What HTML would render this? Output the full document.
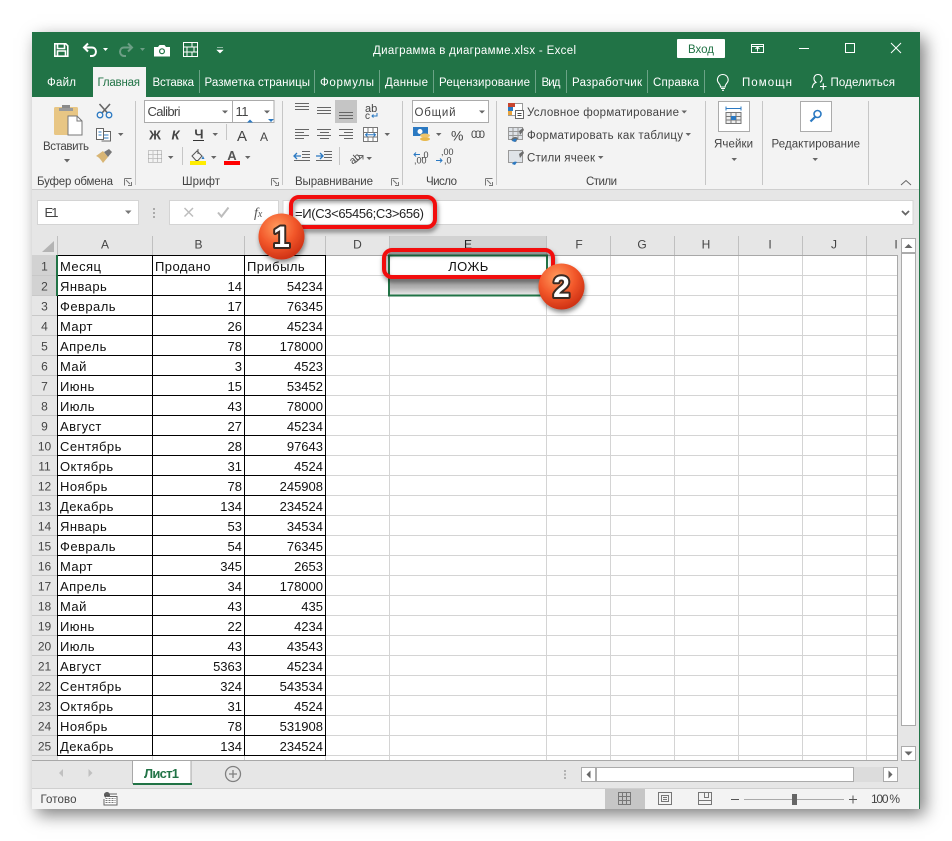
<!DOCTYPE html>
<html><head><meta charset="utf-8"><style>
html,body{margin:0;padding:0;background:#fff;width:952px;height:841px;overflow:hidden}
#w{position:absolute;left:32px;top:32px;width:888px;height:777px;box-shadow:5px 6px 16px rgba(0,0,0,.5)}
svg{position:absolute;left:0;top:0}
text{font-family:"Liberation Sans",sans-serif;font-size:11.5px;fill:#444}
.t text{fill:#fff}
.c text{font-size:13px;fill:#111;letter-spacing:.45px}
.n text{font-size:13px;fill:#111;text-anchor:end}
.h text{font-size:12px;fill:#444;text-anchor:middle}
.i{fill:none;stroke:#666;stroke-width:1}
.a{fill:#666}
</style></head><body><div id="w"></div>
<svg width="952" height="841" viewBox="0 0 952 841" xmlns="http://www.w3.org/2000/svg">
<defs>
<radialGradient id="b" cx=".4" cy=".3" r=".8"><stop offset="0" stop-color="#ff9a5c"/><stop offset=".5" stop-color="#f2572a"/><stop offset="1" stop-color="#c4260e"/></radialGradient>
<linearGradient id="s" x1="0" x2="0" y1="0" y2="1"><stop offset="0" stop-color="#9c9c9c"/><stop offset=".6" stop-color="#b2b2b2"/><stop offset="1" stop-color="#ececec"/></linearGradient>
<filter id="ds" x="-20%" y="-30%" width="140%" height="170%"><feDropShadow dx="1" dy="3" stdDeviation="2.5" flood-color="#000" flood-opacity=".5"/></filter>
<filter id="ds2" x="-30%" y="-30%" width="170%" height="170%"><feDropShadow dx="1" dy="3" stdDeviation="2.5" flood-color="#000" flood-opacity=".45"/></filter>
</defs>

<!-- window base -->
<rect x="32" y="32" width="888" height="777" fill="#e6e6e6"/>
<rect x="32" y="32" width="888" height="65" fill="#217346"/>
<rect x="919" y="32" width="1" height="777" fill="#217346"/>
<rect x="32" y="97" width="887" height="92" fill="#f3f3f3"/>
<rect x="32" y="189" width="887" height="1" fill="#cfcfcf"/>
<rect x="93" y="67" width="53" height="30" fill="#f3f3f3"/>

<!-- title bar -->
<g class="t">
<text x="373" y="54" textLength="203">Диаграмма в диаграмме.xlsx  -  Excel</text>
<text x="47" y="86" textLength="29">Файл</text>
<text x="152.5" y="86" textLength="41.500">Вставка</text>
<text x="204.500" y="86" textLength="105.500">Разметка страницы</text>
<text x="320" y="86" textLength="54">Формулы</text>
<text x="385" y="86" textLength="43">Данные</text>
<text x="439" y="86" textLength="91">Рецензирование</text>
<text x="541.500" y="86" textLength="19">Вид</text>
<text x="572" y="86" textLength="70">Разработчик</text>
<text x="653" y="86" textLength="46">Справка</text>
<text x="742" y="86" textLength="50">Помощн</text>
<text x="830.500" y="86" textLength="64.500">Поделиться</text>
</g>
<text x="97.500" y="86" textLength="42.500" style="fill:#217346">Главная</text>
<path d="M199.500 70v23M314.500 70v23M379.500 70v23M433.500 70v23M535.500 70v23M566.500 70v23M647.500 70v23M704.500 70v23" stroke="#6ba386" fill="none"/>

<!-- QAT -->
<path d="M54.800 43.800h11l2 2v10.400h-13zM57.500 44v4.500h7V44M57.500 56v-5h8v5" fill="none" stroke="#fff" stroke-width="1.600"/>
<path d="M88 43.500l-4 4 4 4M84 47.500h8c5 0 5.500 8 0 8.500h-2" fill="none" stroke="#fff" stroke-width="2"/>
<path d="M103 48h5l-2.500 3z" fill="#fff"/>
<path d="M128 43.500l4 4-4 4M132 47.500h-8c-5 0-5.500 8 0 8.500h2" fill="none" stroke="#6d9f86" stroke-width="2"/>
<path d="M140 48h5l-2.500 3z" fill="#6d9f86"/>
<path d="M154 47h4l1.500-2h5l1.500 2h4v9.500h-16z" fill="#fff"/><circle cx="162" cy="51.200" r="3" fill="#217346"/><circle cx="162" cy="51.200" r="1.800" fill="#fff"/>
<path d="M183.500 42.500h14v14h-14zM183.500 47h14M183.500 52h14M187 47v5M194 47v5M187 52v4.500M192 52v4.500M192 42.500v4.500" fill="none" stroke="#fff"/>
<path d="M217 47.500h6M217 50h6l-3 3z" fill="#fff" stroke="#fff" stroke-width=".6"/>

<!-- window controls -->
<rect x="677" y="39" width="48" height="19" fill="#fff" rx="1"/>
<text x="688" y="53" textLength="26" style="fill:#217346">Вход</text>
<path d="M751.500 44.500h12v8h-12zM751.500 46.500h12M757.500 51.500v-4M755.500 49l2-2 2 2" fill="none" stroke="#fff"/>
<path d="M799 48.500h10" stroke="#fff"/>
<rect x="845.500" y="43.500" width="9" height="9" fill="none" stroke="#fff"/>
<path d="M891 43l10 10M901 43l-10 10" stroke="#fff" fill="none"/>
<path d="M722.800 74.500c-4.700 0-7 5.300-4 8.700 1 1.200 1.700 2.200 1.700 3.800h4.600c0-1.600.7-2.600 1.700-3.800 3-3.400.7-8.700-4-8.700zM721 88.500h4M722 90.300h2" fill="none" stroke="#fff" stroke-width="1.100"/>
<path d="M818 74.500c-2.800 0-4.300 2.200-4 4.700.2 1.400 1 2.500 2 3.200-2.300.8-3.500 2.600-3.800 5.600M820 82.400c1-.7 1.800-1.800 2-3.200.3-2.500-1.200-4.700-4-4.700M820 86.500h6.500M823.300 83.300v6.500" fill="none" stroke="#fff" stroke-width="1.100"/>

<!-- ribbon separators -->
<path d="M135.500 101v84M282.500 101v84M402.500 101v84M496.500 101v84M705.500 101v84M762.500 101v84M868.500 101v84" stroke="#c6c6c6"/>
<path d="M226.500 124v16M182.500 147v18M339.500 147v18" stroke="#c6c6c6"/>

<!-- clipboard group -->
<rect x="54" y="107" width="24" height="28" rx="1.500" fill="#e8c684"/>
<rect x="62" y="105" width="8" height="5" fill="#8a8a8a"/><rect x="59" y="108" width="14" height="3" fill="#9a9a9a"/>
<path d="M68 116h9l5 5v14h-14z" fill="#fff" stroke="#777"/><path d="M77 116v5h5" fill="none" stroke="#777"/>
<text x="43" y="150" textLength="46">Вставить</text>
<path d="M64 159h6l-3 3.500z" class="a"/>
<path d="M99.500 104l8 9M110 104l-8 9" stroke="#666" stroke-width="1.600" fill="none"/>
<circle cx="100" cy="115" r="2.800" fill="none" stroke="#2b79c2" stroke-width="1.300"/><circle cx="109" cy="115" r="2.800" fill="none" stroke="#2b79c2" stroke-width="1.300"/>
<path d="M96.500 128.500h7v11h-7zM103.500 131.500h7v9.500h-9" fill="#fff" stroke="#666"/><path d="M98.500 132h3M98.500 135h3M104 135h4.500M104 138h4.500" stroke="#2b79c2"/>
<path d="M118 133h5.500l-2.800 3z" class="a"/>
<path d="M96 156l7-5 5 6-5 6c-2-3-4-6-7-7z" fill="#d8b574"/><path d="M104 152l5-3 3 3-4 5z" fill="#777"/>
<text x="37" y="185" textLength="76">Буфер обмена</text>
<path d="M124.500 178.500h7M124.500 178.500v7M131.500 182v3.500h-3.500M126 180l4 4" fill="none" stroke="#777"/>

<!-- font group -->
<rect x="144.500" y="100.500" width="88" height="22" fill="#fff" stroke="#ababab"/>
<rect x="232.500" y="100.500" width="41.500" height="22" fill="#fff" stroke="#ababab"/>
<text x="147.500" y="116" style="font-size:13px" textLength="33">Calibri</text>
<text x="235.500" y="116" style="font-size:13px" textLength="13">11</text>
<path d="M222 110.500h6l-3 3zM264 110.500h6l-3 3z" class="a"/>
<text x="155" y="139.500" text-anchor="middle" style="font-size:13px;font-weight:bold" >Ж</text>
<text x="175.500" y="139.500" text-anchor="middle" style="font-size:13px;font-weight:bold;font-style:italic">К</text>
<text x="199" y="138.500" text-anchor="middle" style="font-size:13px;font-weight:bold">Ч</text>
<path d="M193 140.500h11" stroke="#333"/>
<path d="M212.500 133h5.500l-2.800 3z" class="a"/>
<text x="242" y="141" text-anchor="middle" style="font-size:15px">А</text><path d="M246 121.500l3-3 3 3z" fill="#2b79c2" transform="translate(1 1)"/>
<text x="264" y="141" text-anchor="middle" style="font-size:12px">А</text><path d="M266 121h6l-3 3z" fill="#2b79c2" transform="translate(2 -2)"/>
<path d="M148.500 150.500h13v12h-13zM153 150.500v12M157.500 150.500v12M148.500 154.500h13M148.500 158.500h13" fill="none" stroke="#999" stroke-dasharray="1 1"/>
<path d="M168 156h5.500l-2.800 3z" class="a"/>
<path d="M192 156l5-5 5 5-4 4.500h-2zM198 149v5" fill="none" stroke="#555"/><path d="M203 156l1.500 3-3 0z" fill="#2b79c2"/>
<rect x="190" y="161" width="16" height="4" fill="#ffec00"/>
<path d="M211 156h5.500l-2.800 3z" class="a"/>
<text x="232" y="160" text-anchor="middle" style="font-size:13px;font-weight:bold;fill:#555">А</text>
<rect x="224" y="161" width="16" height="4" fill="#f00"/>
<path d="M245 156h5.500l-2.800 3z" class="a"/>
<text x="182" y="185" textLength="38">Шрифт</text>
<path d="M271.500 178.500h7M271.500 178.500v7M278.500 182v3.500H275M273 180l4 4" fill="none" stroke="#777"/>

<!-- alignment -->
<rect x="335" y="100" width="22" height="23" fill="#c5c5c5"/>
<path d="M295 103.500h14M295 106.500h14M295 109.500h14M317 107.500h14M317 110.500h14M317 113.500h14M339 112.500h14M339 115.500h14M339 118.500h14" stroke="#666"/>
<text x="365" y="112" style="font-size:11px">ab</text><text x="365" y="119" style="font-size:10px" >c</text><path d="M377 113v3h-5M373.500 114.500l-1.500 1.500 1.500 1.500" fill="none" stroke="#2b79c2"/>
<path d="M295 129.500h14M295 132.500h9M295 135.500h14M295 138.500h9M317 129.500h14M320 132.500h9M317 135.500h14M320 138.500h9M339 129.500h14M344 132.500h9M339 135.500h14M344 138.500h9" stroke="#666"/>
<path d="M363.500 127.500h14v14h-14zM363.500 132.500h14M363.500 137h14M368 127.500v5M373 127.500v5M368 137v4.500M373 137v4.500" fill="#fff" stroke="#777"/><path d="M366 134.800h9M367.500 133l-2 1.800 2 1.800M373.500 133l2 1.800-2 1.800" fill="none" stroke="#2b79c2"/>
<path d="M384.500 133h5.500l-2.800 3z" class="a"/>
<path d="M302 151.500h8M302 154.500h8M302 157.500h8M294 160.500h16M294 151.500h0" stroke="#666"/><path d="M294 156h7M297 153l-3 3 3 3" fill="none" stroke="#2b79c2" stroke-width="1.300"/>
<path d="M324 151.500h8M324 154.500h8M324 157.500h8M316 160.500h16" stroke="#666"/><path d="M316 156h7M320 153l3 3-3 3" fill="none" stroke="#2b79c2" stroke-width="1.300"/>
<text x="348" y="162" style="font-size:10px" transform="rotate(-40 354 157)">ab</text><path d="M355 163l8-7M359 155.500h4v4" fill="none" stroke="#666"/>
<path d="M366.500 157h5.500l-2.800 3z" class="a"/>
<text x="295" y="185" textLength="78">Выравнивание</text>
<path d="M391.500 178.500h7M391.500 178.500v7M398.500 182v3.500H395M393 180l4 4" fill="none" stroke="#777"/>

<!-- number -->
<rect x="412.500" y="100.500" width="76" height="22" fill="#fff" stroke="#ababab"/>
<text x="414.500" y="116" textLength="41">Общий</text>
<path d="M479 110.500h6l-3 3z" class="a"/>
<rect x="413" y="127" width="15" height="9" fill="#2b79c2"/><circle cx="420" cy="131.500" r="2.500" fill="#fff"/><ellipse cx="425" cy="139" rx="5" ry="2" fill="#e8b84c"/><ellipse cx="425" cy="135.500" rx="5" ry="2" fill="#eec56c"/>
<path d="M436 133h5.500l-2.800 3z" class="a"/>
<text x="451" y="140.500" style="font-size:14px" textLength="12">%</text>
<text x="471" y="138" style="font-size:11px" textLength="14">000</text>
<text x="421" y="158" style="font-size:9px">,0</text><text x="414" y="163.500" style="font-size:9px">,00</text><path d="M414 154.500h6M416 152.500l-2 2 2 2" fill="none" stroke="#2b79c2"/>
<text x="441" y="155" style="font-size:9px">,00</text><text x="444" y="163.500" style="font-size:9px">,0</text><path d="M436 160.500h6M440 158.500l2 2-2 2" fill="none" stroke="#2b79c2"/>
<text x="426" y="185" textLength="31">Число</text>
<path d="M485.500 178.500h7M485.500 178.500v7M492.500 182v3.500H489M487 180l4 4" fill="none" stroke="#777"/>

<!-- styles -->
<rect x="508.500" y="103.500" width="14" height="12" fill="#fff" stroke="#999"/><rect x="508" y="103" width="7" height="4" fill="#c8452e"/><rect x="508" y="107" width="5" height="4" fill="#2b79c2"/><rect x="508" y="111" width="4" height="4" fill="#e8a33c"/><rect x="515.500" y="110.500" width="8" height="8" fill="#fff" stroke="#666"/><path d="M517.500 113.500h4M517.500 115.500h4" stroke="#444"/>
<text x="527" y="116" textLength="152">Условное форматирование</text><path d="M681.500 110.500h5.500l-2.800 3z" class="a"/>
<path d="M508.500 127.500h14v12h-14zM508.500 131.500h14M508.500 135.500h14M513 127.500v12M518 127.500v12" fill="#dfe3e8" stroke="#999"/><path d="M519 131l4-3 1 2-4 5zM511 140c1-3 5-4 7-2l-2 4z" fill="#6c6c6c"/><path d="M512 141c1-2 3-3 5-2l-2 3z" fill="#2b79c2"/>
<text x="527" y="139" textLength="156">Форматировать как таблицу</text><path d="M685.500 133h5.500l-2.800 3z" class="a"/>
<path d="M508.500 150.500h14v12h-14z" fill="#dfe3e8" stroke="#999"/><path d="M519 154l4-3 1 2-4 5z" fill="#6c6c6c"/><path d="M512 164c1-2 3-3 5-2l-2 3z" fill="#2b79c2"/>
<text x="527" y="161.500" textLength="68">Стили ячеек</text><path d="M598 156h5.500l-2.800 3z" class="a"/>
<text x="586" y="185" textLength="31">Стили</text>

<!-- cells / edit -->
<rect x="718.500" y="101.500" width="31" height="30" fill="#fff" stroke="#ababab"/>
<path d="M726 112.500h15v11h-15zM726 116.500h15M726 120h15M731 112.500v11M736 112.500v11" fill="#eee" stroke="#777"/><rect x="731" y="116" width="5" height="4" fill="#2b79c2"/><path d="M726 108.500h15M726 106.500v4M741 106.500v4" stroke="#2b79c2" fill="none"/>
<text x="714" y="147.500" textLength="39">Ячейки</text><path d="M731.500 158h5.500l-2.800 3z" class="a"/>
<rect x="800.500" y="101.500" width="31" height="30" fill="#fff" stroke="#ababab"/>
<circle cx="817.500" cy="114" r="3.500" fill="#fff" stroke="#2b79c2" stroke-width="1.600"/><path d="M815 117l-4.500 4.500" stroke="#2b79c2" stroke-width="2.200"/>
<text x="771.500" y="147.500" textLength="88.500">Редактирование</text><path d="M812.500 158h5.500l-2.800 3z" class="a"/>
<path d="M901 185l5-4.500 5 4.500" fill="none" stroke="#666"/>

<!-- formula bar -->
<rect x="37.500" y="200.500" width="101" height="24" fill="#fff" stroke="#d4d4d4"/>
<rect x="169.500" y="200.500" width="109" height="24" fill="#fff" stroke="#d4d4d4"/>
<rect x="283" y="200.500" width="630" height="24" fill="#fff" stroke="#d4d4d4"/>
<text x="44.500" y="217" textLength="14" style="font-size:13px">E1</text>
<path d="M125 210.500h6.500l-3.200 3.500z" fill="#777"/>
<path d="M153 208h2v2h-2zM153 212h2v2h-2zM153 216h2v2h-2z" fill="#aaa"/>
<path d="M184.500 208l8.500 8.500M193 208l-8.500 8.500" stroke="#bdbdbd" stroke-width="1.500" fill="none"/>
<path d="M218 212.500l3.500 4 7-9" stroke="#bdbdbd" stroke-width="2" fill="none"/>
<text x="254" y="217" style="font-family:'Liberation Serif',serif;font-style:italic;font-size:14px;fill:#555">f<tspan font-size="10" dy="0">x</tspan></text>
<text x="295" y="218" style="font-size:13px;fill:#222" textLength="129">=И(С3&lt;65456;С3&gt;656)</text>
<path d="M902 211l3.500 3.500 3.500-3.500" fill="none" stroke="#666" stroke-width="1.800"/>

<!-- column headers -->
<rect x="32" y="236" width="865" height="19" fill="#e6e6e6"/>
<rect x="390" y="236" width="157" height="19" fill="#d2d2d2"/>
<path d="M42 252h12v-11z" fill="#b4b4b4"/>
<path d="M57.500 236v19M152.500 236v19M244.500 236v19M325.500 236v19M389.500 236v19M546.500 236v19M610.500 236v19M674.500 236v19M738.500 236v19M802.500 236v19M866.500 236v19" stroke="#c0c0c0"/>
<g class="h">
<text x="105" y="248.500">A</text><text x="198.500" y="248.500">B</text><text x="285" y="248.500">C</text><text x="357.500" y="248.500">D</text><text x="468" y="248.500" style="fill:#222">E</text><text x="579" y="248.500">F</text><text x="642" y="248.500">G</text><text x="706" y="248.500">H</text><text x="770" y="248.500">I</text><text x="834" y="248.500">J</text><text x="896" y="248.500">I</text>
</g>

<!-- grid -->
<rect x="57" y="255" width="840" height="505" fill="#fff"/>
<rect x="57" y="255" width="841" height="1" fill="#a8a8a8"/>
<rect x="897" y="255" width="1" height="506" fill="#a8a8a8"/>
<rect x="32" y="760" width="866" height="1" fill="#a8a8a8"/>
<path d="M326 275.500H897M326 295.500H897M326 315.500H897M326 335.500H897M326 355.500H897M326 375.500H897M326 395.500H897M326 415.500H897M326 435.500H897M326 455.500H897M326 475.500H897M326 495.500H897M326 515.500H897M326 535.500H897M326 555.500H897M326 575.500H897M326 595.500H897M326 615.500H897M326 635.500H897M326 655.500H897M326 675.500H897M326 695.500H897M326 715.500H897M326 735.500H897M326 755.500H897M389.500 256V760M546.500 256V760M610.500 256V760M674.500 256V760M738.500 256V760M802.500 256V760M866.500 256V760M57.500 756V760M152.500 756V760M244.500 756V760M325.500 756V760" stroke="#d4d4d4" fill="none"/>
<path d="M57 255.500H326M57 275.500H326M57 295.500H326M57 315.500H326M57 335.500H326M57 355.500H326M57 375.500H326M57 395.500H326M57 415.500H326M57 435.500H326M57 455.500H326M57 475.500H326M57 495.500H326M57 515.500H326M57 535.500H326M57 555.500H326M57 575.500H326M57 595.500H326M57 615.500H326M57 635.500H326M57 655.500H326M57 675.500H326M57 695.500H326M57 715.500H326M57 735.500H326M57 755.500H326M57.500 255V756M152.500 255V756M244.500 255V756M325.500 255V756" stroke="#000" fill="none"/>

<!-- row headers -->
<rect x="32" y="255" width="25" height="505" fill="#e6e6e6"/>
<rect x="32" y="255" width="25" height="41" fill="#d2d2d2"/>
<path d="M32 275.500H57M32 295.500H57M32 315.500H57M32 335.500H57M32 355.500H57M32 375.500H57M32 395.500H57M32 415.500H57M32 435.500H57M32 455.500H57M32 475.500H57M32 495.500H57M32 515.500H57M32 535.500H57M32 555.500H57M32 575.500H57M32 595.500H57M32 615.500H57M32 635.500H57M32 655.500H57M32 675.500H57M32 695.500H57M32 715.500H57M32 735.500H57M32 755.500H57" stroke="#c8c8c8"/>
<rect x="56" y="255" width="2" height="41" fill="#217346"/>
<g class="h">
<text x="44.500" y="270.500">1</text><text x="44.500" y="290.500">2</text><text x="44.500" y="310.500">3</text><text x="44.500" y="330.500">4</text><text x="44.500" y="350.500">5</text><text x="44.500" y="370.500">6</text><text x="44.500" y="390.500">7</text><text x="44.500" y="410.500">8</text><text x="44.500" y="430.500">9</text><text x="44.500" y="450.500">10</text><text x="44.500" y="470.500">11</text><text x="44.500" y="490.500">12</text><text x="44.500" y="510.500">13</text><text x="44.500" y="530.500">14</text><text x="44.500" y="550.500">15</text><text x="44.500" y="570.500">16</text><text x="44.500" y="590.500">17</text><text x="44.500" y="610.500">18</text><text x="44.500" y="630.500">19</text><text x="44.500" y="650.500">20</text><text x="44.500" y="670.500">21</text><text x="44.500" y="690.500">22</text><text x="44.500" y="710.500">23</text><text x="44.500" y="730.500">24</text><text x="44.500" y="750.500">25</text>
</g>

<!-- data -->
<g class="c">
<text x="60" y="271">Месяц</text><text x="155" y="271">Продано</text><text x="247" y="271">Прибыль</text>
<text x="60" y="291">Январь</text><text x="60" y="311">Февраль</text><text x="60" y="331">Март</text><text x="60" y="351">Апрель</text><text x="60" y="371">Май</text><text x="60" y="391">Июнь</text><text x="60" y="411">Июль</text><text x="60" y="431">Август</text><text x="60" y="451">Сентябрь</text><text x="60" y="471">Октябрь</text><text x="60" y="491">Ноябрь</text><text x="60" y="511">Декабрь</text><text x="60" y="531">Январь</text><text x="60" y="551">Февраль</text><text x="60" y="571">Март</text><text x="60" y="591">Апрель</text><text x="60" y="611">Май</text><text x="60" y="631">Июнь</text><text x="60" y="651">Июль</text><text x="60" y="671">Август</text><text x="60" y="691">Сентябрь</text><text x="60" y="711">Октябрь</text><text x="60" y="731">Ноябрь</text><text x="60" y="751">Декабрь</text>
</g>
<g class="n">
<text x="242" y="291">14</text><text x="242" y="311">17</text><text x="242" y="331">26</text><text x="242" y="351">78</text><text x="242" y="371">3</text><text x="242" y="391">15</text><text x="242" y="411">43</text><text x="242" y="431">27</text><text x="242" y="451">28</text><text x="242" y="471">31</text><text x="242" y="491">78</text><text x="242" y="511">134</text><text x="242" y="531">53</text><text x="242" y="551">54</text><text x="242" y="571">345</text><text x="242" y="591">34</text><text x="242" y="611">43</text><text x="242" y="631">22</text><text x="242" y="651">43</text><text x="242" y="671">5363</text><text x="242" y="691">324</text><text x="242" y="711">31</text><text x="242" y="731">78</text><text x="242" y="751">134</text>
<text x="323" y="291">54234</text><text x="323" y="311">76345</text><text x="323" y="331">45234</text><text x="323" y="351">178000</text><text x="323" y="371">4523</text><text x="323" y="391">53452</text><text x="323" y="411">78000</text><text x="323" y="431">45234</text><text x="323" y="451">97643</text><text x="323" y="471">4524</text><text x="323" y="491">245908</text><text x="323" y="511">234524</text><text x="323" y="531">34534</text><text x="323" y="551">76345</text><text x="323" y="571">2653</text><text x="323" y="591">178000</text><text x="323" y="611">435</text><text x="323" y="631">4234</text><text x="323" y="651">43543</text><text x="323" y="671">45234</text><text x="323" y="691">543534</text><text x="323" y="711">4524</text><text x="323" y="731">531908</text><text x="323" y="751">234524</text>
</g>

<!-- selection -->
<rect x="390" y="276" width="156" height="19" fill="url(#s)"/>
<rect x="389" y="255.500" width="158" height="40" fill="none" stroke="#217346" stroke-width="2"/>
<text x="468.500" y="271" text-anchor="middle" style="font-size:13px;fill:#111;letter-spacing:.4px">ЛОЖЬ</text>

<!-- scrollbar vertical -->
<rect x="898" y="236" width="21" height="525" fill="#e6e6e6"/>
<rect x="901.500" y="238.500" width="14" height="14" fill="#fff" stroke="#ababab"/>
<path d="M904.500 248l4-4 4 4z" fill="#666"/>
<rect x="901.500" y="253.500" width="14" height="472" fill="#fff" stroke="#ababab"/>
<rect x="901.500" y="746.500" width="14" height="14" fill="#fff" stroke="#ababab"/>
<path d="M904.500 751.500h8l-4 4z" fill="#666"/>

<!-- tab bar -->
<rect x="32" y="761" width="887" height="27" fill="#e6e6e6"/>
<path d="M63 769v8l-4-4zM88.500 769v8l4-4z" fill="#c0c0c0"/>
<path d="M132.500 784V760.500h58.500V784" fill="#fff" stroke="#a8a8a8"/>
<rect x="133" y="783" width="59" height="2" fill="#217346"/>
<text x="144" y="778" textLength="35" style="font-size:13px;font-weight:bold;fill:#217346">Лист1</text>
<circle cx="233" cy="774" r="7.500" fill="none" stroke="#808080" stroke-width="1.300"/><path d="M229 774h8M233 770v8" stroke="#808080" stroke-width="1.300"/>
<path d="M564 770h2v2h-2zM564 773.500h2v2h-2zM564 777h2v2h-2z" fill="#b0b0b0"/>
<rect x="581.500" y="767.500" width="14" height="14" fill="#fff" stroke="#ababab"/><path d="M590.500 770.500v8l-4-4z" fill="#666"/>
<rect x="596.500" y="767.500" width="257" height="14" fill="#fff" stroke="#ababab"/>
<rect x="854" y="767" width="29" height="15" fill="#dcdcdc"/>
<rect x="883.500" y="767.500" width="14" height="14" fill="#fff" stroke="#ababab"/><path d="M888.500 770.500v8l4-4z" fill="#666"/>

<!-- status bar -->
<rect x="32" y="788" width="887" height="1" fill="#cfcfcf"/>
<rect x="32" y="789" width="887" height="20" fill="#f3f3f3"/>
<text x="40.500" y="803" textLength="36">Готово</text>
<circle cx="107" cy="795" r="3" fill="#555"/><path d="M106.500 796.500h10.500v8.500h-13v-6" fill="#fff" stroke="#666"/><path d="M104 794h13" stroke="#666"/><path d="M105.500 798.500h10M105.500 800.500h10M105.500 802.500h10" stroke="#777" stroke-dasharray="2 1"/>
<rect x="605" y="789" width="40" height="20" fill="#c6c6c6"/>
<path d="M618.500 792.500h12v12h-12zM618.500 796.500h12M618.500 800.500h12M622.500 792.500v12M626.500 792.500v12" fill="none" stroke="#777"/>
<path d="M658.500 792.500h13v12h-13zM661.500 795.500h7v6h-7zM663 797.500h4M663 799.500h4" fill="none" stroke="#777"/>
<path d="M698.500 792.500h13v12h-13zM698.500 800.500h13M704.500 792.500v5h4v-5" fill="none" stroke="#777"/>
<path d="M731 799.500h8M849 799.500h8M853 795.500v8" stroke="#555"/>
<path d="M744 799.500h100" stroke="#aaa"/>
<rect x="792" y="794" width="5" height="11" fill="#666"/>
<text x="871" y="803" textLength="29" style="font-size:12px">100 %</text>

<!-- annotations -->
<rect x="291" y="197" width="144" height="30" rx="8" fill="none" stroke="#f20c0c" stroke-width="4" filter="url(#ds)"/>
<rect x="384" y="250" width="169" height="27" rx="8" fill="none" stroke="#f20c0c" stroke-width="4" filter="url(#ds)"/>
<circle cx="281.500" cy="236.500" r="23" fill="url(#b)" filter="url(#ds2)"/>
<text x="281.500" y="247" text-anchor="middle" style="font-size:30px;font-weight:bold;fill:#fff;stroke:#3a2a22;stroke-width:4px;paint-order:stroke;stroke-linejoin:round">1</text>
<circle cx="561.500" cy="286.500" r="23" fill="url(#b)" filter="url(#ds2)"/>
<text x="561.500" y="297" text-anchor="middle" style="font-size:30px;font-weight:bold;fill:#fff;stroke:#3a2a22;stroke-width:4px;paint-order:stroke;stroke-linejoin:round">2</text>
</svg>
</body></html>
